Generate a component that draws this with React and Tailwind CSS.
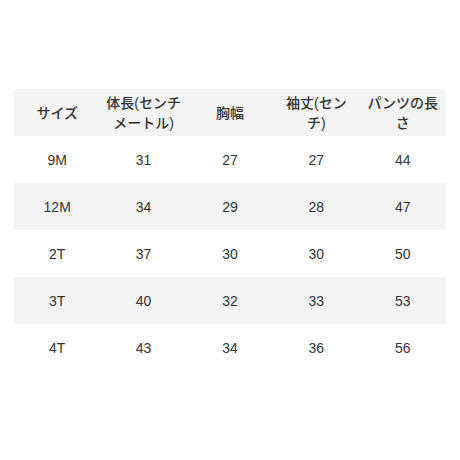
import React from 'react';

const HEAD = ['サイズ', '体長(センチメートル)', '胸幅', '袖丈(センチ)', 'パンツの長さ'];

const ROWS = [
  ['9M', 31, 27, 27, 44],
  ['12M', 34, 29, 28, 47],
  ['2T', 37, 30, 30, 50],
  ['3T', 40, 32, 33, 53],
  ['4T', 43, 34, 36, 56],
];

export default function App() {
  return (
    <div
      className="w-[460px] h-[460px] bg-white pt-[89px] px-[14px] text-[#333]"
      style={{ fontFamily: '"Liberation Sans", "Noto Sans CJK JP", sans-serif' }}
    >
      <table className="w-[432px] table-fixed border-collapse text-[14px]">
        <thead>
          <tr className="bg-[#f4f4f4] h-[47px]">
            {HEAD.map((h) => (
              <th key={h} className="px-[4px] py-[3px] font-medium leading-[20px] text-center align-middle">
                {h}
              </th>
            ))}
          </tr>
        </thead>
        <tbody>
          {ROWS.map((r, i) => (
            <tr key={r[0]} className={`h-[47px] ${i % 2 === 1 ? 'bg-[#f4f4f4]' : 'bg-white'}`}>
              {r.map((c, j) => (
                <td key={j} className="px-[4px] text-center align-middle leading-[20px]">
                  {c}
                </td>
              ))}
            </tr>
          ))}
        </tbody>
      </table>
    </div>
  );
}
